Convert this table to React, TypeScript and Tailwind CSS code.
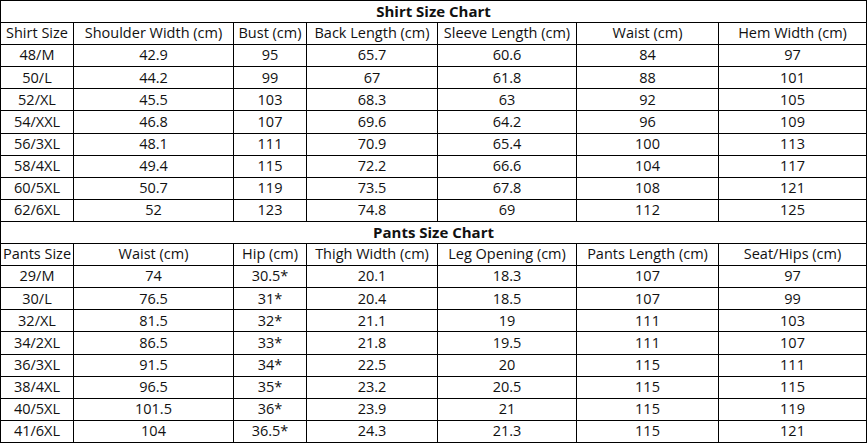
import React from "react";

const COLS = [73, 160, 73, 131, 139, 142, 148];

const shirt = {
  title: "Shirt Size Chart",
  head: [
    "Shirt Size",
    "Shoulder Width (cm)",
    "Bust (cm)",
    "Back Length (cm)",
    "Sleeve Length (cm)",
    "Waist (cm)",
    "Hem Width (cm)",
  ],
  rows: [
    ["48/M", "42.9", "95", "65.7", "60.6", "84", "97"],
    ["50/L", "44.2", "99", "67", "61.8", "88", "101"],
    ["52/XL", "45.5", "103", "68.3", "63", "92", "105"],
    ["54/XXL", "46.8", "107", "69.6", "64.2", "96", "109"],
    ["56/3XL", "48.1", "111", "70.9", "65.4", "100", "113"],
    ["58/4XL", "49.4", "115", "72.2", "66.6", "104", "117"],
    ["60/5XL", "50.7", "119", "73.5", "67.8", "108", "121"],
    ["62/6XL", "52", "123", "74.8", "69", "112", "125"],
  ],
};

const pants = {
  title: "Pants Size Chart",
  head: [
    "Pants Size",
    "Waist (cm)",
    "Hip (cm)",
    "Thigh Width (cm)",
    "Leg Opening (cm)",
    "Pants Length (cm)",
    "Seat/Hips (cm)",
  ],
  rows: [
    ["29/M", "74", "30.5*", "20.1", "18.3", "107", "97"],
    ["30/L", "76.5", "31*", "20.4", "18.5", "107", "99"],
    ["32/XL", "81.5", "32*", "21.1", "19", "111", "103"],
    ["34/2XL", "86.5", "33*", "21.8", "19.5", "111", "107"],
    ["36/3XL", "91.5", "34*", "22.5", "20", "115", "111"],
    ["38/4XL", "96.5", "35*", "23.2", "20.5", "115", "115"],
    ["40/5XL", "101.5", "36*", "23.9", "21", "115", "119"],
    ["41/6XL", "104", "36.5*", "24.3", "21.3", "115", "121"],
  ],
};

function Section({ data }: { data: typeof shirt }) {
  return (
    <>
      <tr className="h-[22px]">
        <td
          colSpan={7}
          className="border border-black p-0 text-center text-[15px] font-bold leading-none"
        >
          {data.title}
        </td>
      </tr>
      <tr className="h-[22px]">
        {data.head.map((h, i) => (
          <td
            key={i}
            className="border border-black p-0 text-center leading-none whitespace-nowrap"
          >
            {h}
          </td>
        ))}
      </tr>
      {data.rows.map((r, ri) => (
        <tr key={ri} className="h-[22px]">
          {r.map((c, ci) => (
            <td
              key={ci}
              className="border border-black p-0 text-center leading-none"
            >
              {c}
            </td>
          ))}
        </tr>
      ))}
    </>
  );
}

export default function App() {
  return (
    <div className="w-[867px] h-[443px] bg-white overflow-hidden">
      <table
        className="w-[867px] h-[443px] table-fixed border-collapse text-[14.5px] text-[#111]"
        style={{ fontFamily: '"Open Sans", "Noto Sans", sans-serif' }}
      >
        <colgroup>
          {COLS.map((w, i) => (
            <col key={i} style={{ width: w }} />
          ))}
        </colgroup>
        <tbody>
          <Section data={shirt} />
          <Section data={pants} />
        </tbody>
      </table>
    </div>
  );
}
